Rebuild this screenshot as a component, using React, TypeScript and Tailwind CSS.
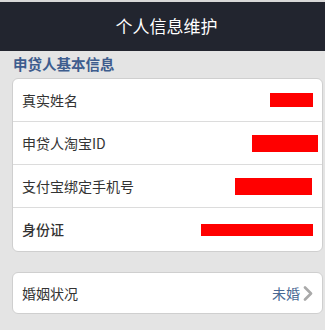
const rows = [
  { label: "真实姓名", box: "w-[43px] h-[14px] mr-[9px]", bold: false },
  { label: "申贷人淘宝ID", box: "w-[66px] h-[17px] mr-[4px]", bold: false },
  { label: "支付宝绑定手机号", box: "w-[77px] h-[17px] mr-[10px]", bold: false },
  { label: "身份证", box: "w-[112px] h-[12px] mr-[9px]", bold: true },
];

export default function App() {
  return (
    <div
      className="w-full h-[330px] bg-[#e4e4e4] overflow-hidden"
      style={{ fontFamily: '"Noto Sans CJK SC", "Noto Sans", sans-serif' }}
    >
      {/* header */}
      <div className="h-[51px] border-t-2 border-[#d8d8d8] bg-[#22252f] flex items-center justify-center">
        <span className="text-[17px] text-white pl-[8px] pb-[2px]">个人信息维护</span>
      </div>

      <div className="h-[27px] flex items-center pl-[13px] pb-[1px]">
        <span className="text-[14.5px] font-bold text-[#3e5d8e]">申贷人基本信息</span>
      </div>

      {/* basic info card */}
      <div className="ml-3 mr-[2px] bg-white border border-[#cfcfcf] rounded-[6px]">
        {rows.map((r, i) => (
          <div
            key={r.label}
            className={
              "h-[43px] flex items-center justify-between pl-[9px] " +
              (i < rows.length - 1 ? "border-b border-[#dcdcdc]" : "")
            }
          >
            <span className={"text-[14px] text-[#333] " + (r.bold ? "font-medium text-[#222]" : "")}>
              {r.label}
            </span>
            <div className={"bg-[#ff0000] " + r.box} />
          </div>
        ))}
      </div>

      {/* marital status */}
      <div className="mt-[20px] ml-3 mr-[2px] h-[42px] bg-white border border-[#cfcfcf] rounded-[6px] flex items-center justify-between pl-[9px] pr-[9px]">
        <span className="text-[14px] text-[#333]">婚姻状况</span>
        <div className="flex items-center gap-[3px]">
          <span className="text-[14px] text-[#4a6994]">未婚</span>
          <svg width="10" height="15" viewBox="0 0 10 15" fill="none">
            <path d="M2 1.5 L8 7.5 L2 13.5" stroke="#a9a9a9" strokeWidth="2.6" strokeLinecap="round" strokeLinejoin="round" />
          </svg>
        </div>
      </div>
    </div>
  );
}
